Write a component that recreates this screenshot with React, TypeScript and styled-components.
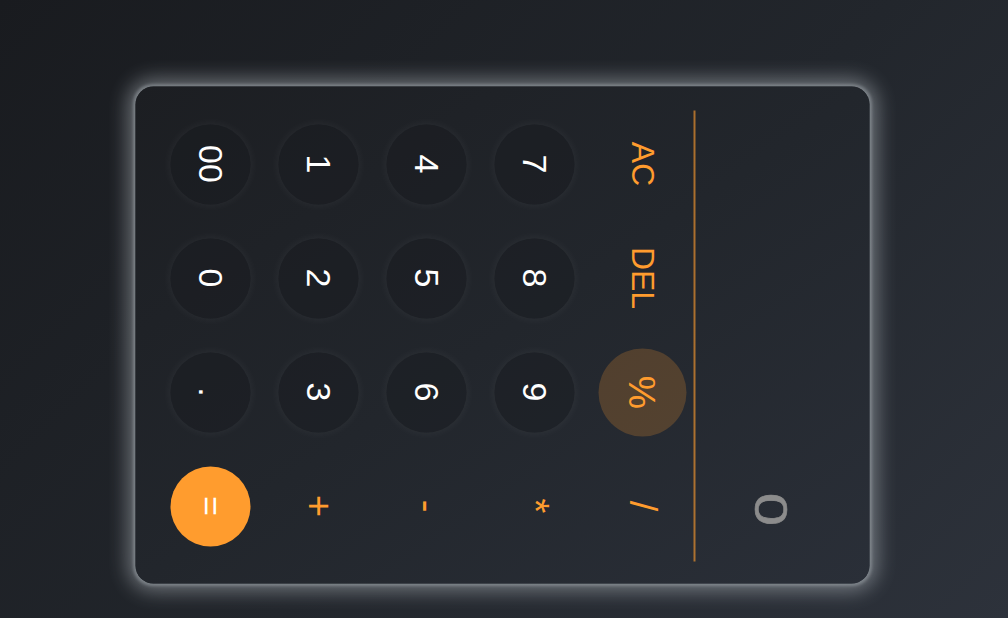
import React from "react";
import styled, { createGlobalStyle, css } from "styled-components";

type Variant = "digit" | "func" | "op" | "equal" | "active";

const Global = createGlobalStyle`
  html, body {
    margin: 0;
    padding: 0;
    height: 100%;
    overflow: hidden;
  }
  body {
    background: linear-gradient(135deg, #191b1f 0%, #22262c 55%, #2d323b 100%);
    font-family: "Liberation Sans", Arial, sans-serif;
  }
`;

const Stage = styled.main`
  width: 100vw;
  height: 100vh;
  box-sizing: border-box;
  padding: 52px 4px 0 0;
  display: flex;
  align-items: center;
  justify-content: center;
`;

const Calculator = styled.section`
  flex: none;
  width: 497px;
  height: 734px;
  box-sizing: border-box;
  border-radius: 18px;
  background: linear-gradient(to top right, #1c1e22 0%, #22262c 50%, #2a2f38 100%);
  box-shadow: 0 0 3px 2px rgba(150, 156, 162, 0.55),
    0 0 20px 7px rgba(195, 201, 207, 0.48);
  transform: rotate(90deg);
  display: flex;
  flex-direction: column;
`;

const Display = styled.div`
  height: 174px;
  box-sizing: border-box;
  padding: 23px 57px 0 0;
  display: flex;
  align-items: center;
  justify-content: flex-end;
  font-size: 46px;
  color: #8c8c8c;
`;

const DisplayValue = styled.span`
  display: inline-block;
  line-height: 1;
  transform: scaleX(1.3);
  transform-origin: right center;
  -webkit-text-stroke: 0.6px #8c8c8c;
`;

const Divider = styled.hr`
  margin: 0 22px 0 24px;
  height: 2px;
  border: none;
  background: rgba(255, 156, 46, 0.62);
`;

const Keypad = styled.div`
  display: grid;
  grid-template-columns: repeat(4, 80px);
  grid-auto-rows: 80px;
  column-gap: 34px;
  row-gap: 28px;
  justify-content: center;
  padding-top: 11px;
`;

const variants = {
  digit: css`
    color: #ffffff;
    background: rgba(24, 26, 30, 0.42);
    box-shadow: 0 0 8px 2px rgba(255, 255, 255, 0.045);
  `,
  func: css`
    color: #ff9c2e;
    background: transparent;
    font-size: 32px;
  `,
  op: css`
    color: #ff9c2e;
    background: transparent;
    font-size: 38px;
  `,
  equal: css`
    color: #ffffff;
    background: #ff9c2e;
  `,
  active: css`
    color: #ff9c2e;
    background: rgba(255, 156, 46, 0.21);
    transform: scale(1.1);
  `,
};

const Key = styled.button<{ $variant: Variant }>`
  width: 80px;
  height: 80px;
  padding: 0;
  border: none;
  border-radius: 50%;
  display: flex;
  align-items: center;
  justify-content: center;
  font-family: "Liberation Sans", Arial, sans-serif;
  font-size: 34px;
  cursor: pointer;
  ${({ $variant }) => variants[$variant]}
`;

const keys: { label: string; variant: Variant }[] = [
  { label: "AC", variant: "func" },
  { label: "DEL", variant: "func" },
  { label: "%", variant: "active" },
  { label: "/", variant: "op" },
  { label: "7", variant: "digit" },
  { label: "8", variant: "digit" },
  { label: "9", variant: "digit" },
  { label: "*", variant: "op" },
  { label: "4", variant: "digit" },
  { label: "5", variant: "digit" },
  { label: "6", variant: "digit" },
  { label: "-", variant: "op" },
  { label: "1", variant: "digit" },
  { label: "2", variant: "digit" },
  { label: "3", variant: "digit" },
  { label: "+", variant: "op" },
  { label: "00", variant: "digit" },
  { label: "0", variant: "digit" },
  { label: ".", variant: "digit" },
  { label: "=", variant: "equal" },
];

export default function App() {
  return (
    <>
      <Global />
      <Stage>
        <Calculator>
          <Display>
            <DisplayValue>0</DisplayValue>
          </Display>
          <Divider />
          <Keypad>
            {keys.map((k) => (
              <Key key={k.label} $variant={k.variant}>
                {k.label}
              </Key>
            ))}
          </Keypad>
        </Calculator>
      </Stage>
    </>
  );
}
